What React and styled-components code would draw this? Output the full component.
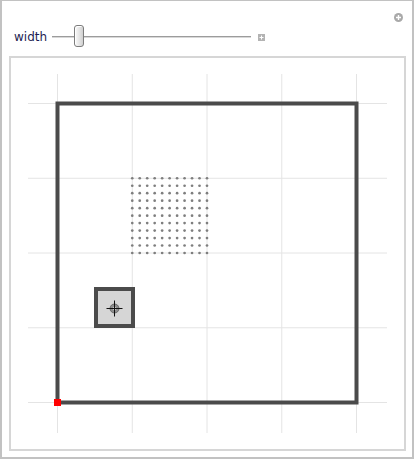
import styled, { createGlobalStyle } from 'styled-components';

const GlobalStyle = createGlobalStyle`
body {
    margin: 0;
    background: #ffffff;
    font-family: "DejaVu Sans", Verdana, sans-serif;
}
`

const Frame = styled.div`
box-sizing: border-box;
width: 414px;
height: 459px;
border: 2px solid #c2c2c2;
border-top-width: 1px;
padding: 0 6px 6px 7px;
display: flex;
flex-direction: column;
background: #ffffff;
`

const Header = styled.div`
height: 55px;
display: grid;
grid-template-columns: 1fr auto;
`

const Controls = styled.div`
align-self: end;
display: flex;
align-items: center;
gap: 5px;
padding: 0 0 8px 5px;
height: 22px;
`

const Label = styled.span`
font-size: 12px;
color: #1d1d52;
line-height: 22px;
`

const Track = styled.div`
position: relative;
width: 199px;
height: 2px;
background: linear-gradient(#9c9c9c 50%, #d8d8d8 50%);
`

const Thumb = styled.div`
position: absolute;
left: ${p => p.$at}px;
top: -11px;
box-sizing: border-box;
width: 10px;
height: 22px;
border: 1px solid #7c7c7c;
border-radius: 3px;
background: linear-gradient(90deg, #fbfbfb, #e2e2e2 60%, #d0d0d0);
box-shadow: inset 1px 1px 0 #ffffff;
`

const IconBox = styled.span`
display: flex;
align-self: ${p => p.$top ? 'start' : 'center'};
margin: ${p => p.$top ? '12px 3px 0 0' : '0 0 0 2px'};
`

const Panel = styled.div`
flex: 1;
border: 2px solid #d6d6d6;
display: flex;
`

const PlusSquare = () => (
    <svg width="7" height="7" viewBox="0 0 7 7">
        <rect width="7" height="7" fill="#b3b3b3" />
        <path d="M3.5 1.5v4M1.5 3.5h4" stroke="#ffffff" strokeWidth="1" />
    </svg>
)

const PlusCircle = () => (
    <svg width="9" height="9" viewBox="0 0 9 9">
        <circle cx="4.5" cy="4.5" r="4.5" fill="#a9a9a9" />
        <path d="M4.5 2v5M2 4.5h5" stroke="#ffffff" strokeWidth="1.4" />
    </svg>
)

const gx = (i) => 57.5 + 74.75 * i
const gy = (i) => 402.5 - 74.75 * i

const Plot = () => {
    const ticks = [0, 1, 2, 3, 4]
    const dots = []
    for (let i = 0; i <= 10; i++) {
        for (let j = 0; j <= 10; j++) {
            dots.push(<circle key={i + '-' + j} cx={gx(1) + 7.475 * i} cy={gy(3) + 7.475 * j} r="1.35" fill="#7e7e7e" />)
        }
    }
    return (
        <svg width="393" height="390" viewBox="11 58 393 390">
            {ticks.map(t => (
                <line key={'v' + t} x1={gx(t)} x2={gx(t)} y1="74" y2="433" stroke="#e4e4e4" strokeWidth="1" />
            ))}
            {ticks.map(t => (
                <line key={'h' + t} x1="28" x2="387" y1={gy(t)} y2={gy(t)} stroke="#e4e4e4" strokeWidth="1" />
            ))}
            <rect x="57.5" y="103.5" width="299" height="299" fill="none" stroke="#4b4b4b" strokeWidth="4" />
            {dots}
            <rect x="96" y="289" width="37" height="37" fill="#d6d6d6" stroke="#4b4b4b" strokeWidth="4" />
            <circle cx="114.5" cy="308.5" r="4.5" fill="#8e8e8e" stroke="#5a5a5a" strokeWidth="0.8" />
            <circle cx="114.5" cy="308.5" r="1.8" fill="#cfcfcf" />
            <path d="M106.5 308.5h16M114.5 300.5v16" stroke="#111111" strokeWidth="1" />
            <rect x="54" y="399" width="7" height="7" fill="#ff0000" />
        </svg>
    )
}

const App = () => {
    return (
        <>
            <GlobalStyle />
            <Frame>
                <Header>
                    <Controls>
                        <Label>width</Label>
                        <Track>
                            <Thumb $at={22} />
                        </Track>
                        <IconBox><PlusSquare /></IconBox>
                    </Controls>
                    <IconBox $top><PlusCircle /></IconBox>
                </Header>
                <Panel>
                    <Plot />
                </Panel>
            </Frame>
        </>
    )
}

export default App
